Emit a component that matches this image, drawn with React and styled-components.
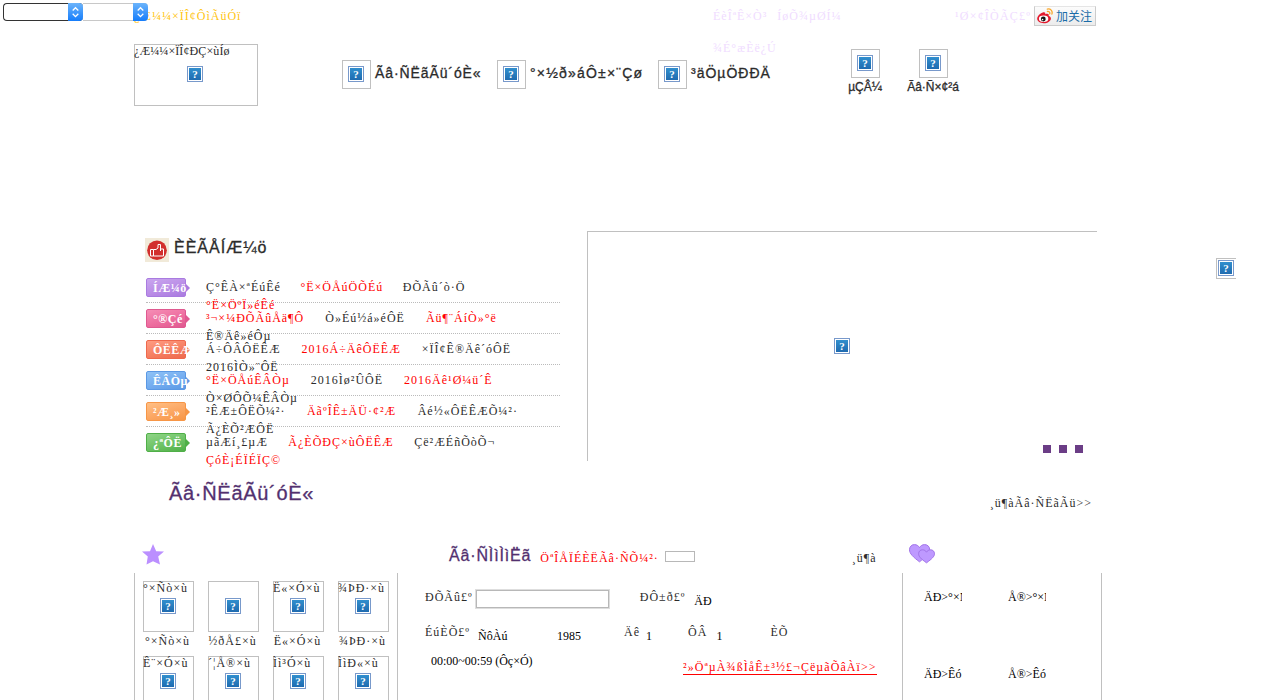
import React from "react";
import styled, { createGlobalStyle } from "styled-components";

const Global = createGlobalStyle`
  * { box-sizing: border-box; }
  body {
    margin: 0; background: #fff; color: #2b2b2b; overflow: hidden;
    font: 12px/18px "Liberation Serif", "Noto Sans CJK SC", serif;
    letter-spacing: 1px;
  }
`;
const Page = styled.div`position: relative; width: 1280px; height: 700px; overflow: hidden;`;
const Wrap = styled.div`width: 968px; margin-left: 134px;`;
const Text = styled.span`
  display: block; white-space: nowrap; flex: none;
  color: ${p => p.$color || "inherit"};
  letter-spacing: ${p => p.$track ?? 1}px;
  margin-left: ${p => p.$left || 0}px;
  margin-top: ${p => p.$top || 0}px;
`;
const Heading = styled(Text)`
  font-family: "Liberation Sans", sans-serif;
  font-size: ${p => p.$size}px;
  color: ${p => p.$color || "#2b2b2b"};
  -webkit-text-stroke: 0.3px currentColor;
`;

/* Drop-downs over the page corner */
const Selects = styled.div`position: absolute; z-index: 2; left: 3px; top: 3px; display: flex;`;
const Select = styled.div`
  width: ${p => p.$w}px; height: 18px; display: flex; justify-content: flex-end;
  border: 1px solid ${p => (p.$dark ? "#333" : "#c8c8c8")}; border-right: 0;
  border-left-width: ${p => (p.$dark ? 1 : 0)}px;
  border-radius: ${p => (p.$dark ? "4px" : "0 4px 4px 0")}; background: #fff;
`;
const Arrows = styled.svg`display: block; width: 15px; height: 18px; margin-top: -1px;`;
const Picker = ({ w, dark }) => (
  <Select $w={w} $dark={dark}>
    <Arrows viewBox="0 0 15 18">
      <defs><linearGradient id="aqua" x2="0" y2="1"><stop stopColor="#6cb4fb" /><stop offset="1" stopColor="#157dfb" /></linearGradient></defs>
      <path d="M0 0H11Q15 0 15 4V14Q15 18 11 18H0Z" fill="url(#aqua)" />
      <path d="M4.700 7.500 7.500 4.700 10.300 7.500M4.700 10.800 7.500 13.600 10.300 10.800" fill="none" stroke="#fff" strokeWidth="1.3" />
    </Arrows>
  </Select>
);

/* Missing image placeholder */
const Frame = styled.div`
  position: relative; flex: none; display: flex; align-items: center; justify-content: center;
  width: ${p => p.$w}px; height: ${p => p.$h}px; padding: 0 ${p => (p.$w % 2 ? 1 : 2)}px ${p => (p.$h % 2 ? 1 : 2)}px 0;
  border: 1px solid #c0c0c0;
`;
const Alt = styled.span`position: absolute; left: -1px; top: -3px; white-space: nowrap; letter-spacing: ${p => p.$track ?? 1}px;`;
const Mark = styled.svg`display: block; width: 16px; height: 16px; flex: none;`;
const Missing = () => (
  <Mark viewBox="0 0 16 16">
    <defs><linearGradient id="mark" x2="0" y2="1"><stop stopColor="#318fce" /><stop offset="1" stopColor="#1f6bb0" /></linearGradient></defs>
    <rect x=".5" y=".5" width="15" height="15" fill="#fff" stroke="#7899cb" />
    <rect x="2" y="2" width="12" height="12" fill="url(#mark)" />
    <text x="8" y="12" textAnchor="middle" fontFamily="Liberation Serif, serif" fontWeight="bold" fontSize="11" letterSpacing="0" fill="#fff">?</text>
  </Mark>
);
const Picture = ({ w = 29, h = w, alt, track }) => (
  <Frame $w={w} $h={h}>{alt && <Alt $track={track}>{alt}</Alt>}<Missing /></Frame>
);

const TopBar = styled(Wrap)`
  display: grid; grid-template-columns: 579px 242px 79px 1fr; height: 32px; padding-top: 6px;
`;
const TopLinks = styled.div`
  display: flex; flex-wrap: wrap; gap: 14px 10px; width: 140px; height: 50px; color: #f0dcff;
`;
const Follow = styled.div`
  width: 62px; height: 20px; display: flex; align-items: center; padding-left: 2px; gap: 3px;
  border: 1px solid #ccc; border-top-color: #e5e5e5; background: linear-gradient(#fcfcfc, #ececec);
  color: #1a6ca8; font: 12px/18px "Noto Sans CJK SC", sans-serif; letter-spacing: 0; white-space: nowrap;
`;
const Weibo = () => (
  <svg width="16" height="16" viewBox="0 0 16 16">
    <path d="M6.3 4.2C3.3 5 .2 8 .2 10.8c0 2.7 3.1 4.4 6.5 4.4 4.2 0 7.2-2.3 7.2-4.8 0-1.5-1.2-2.2-2.2-2.5.4-1.9-.6-2.6-3.5-1.6.5-1.7-.2-2.4-1.9-2.1Z" fill="#e31a2d" />
    <ellipse cx="6.6" cy="10.8" rx="4.7" ry="3.2" fill="#fff" />
    <circle cx="6.3" cy="11" r="2.4" fill="#161616" /><circle cx="5.6" cy="11.6" r=".8" fill="#fff" />
    <path d="M10.3 1.1c3.2-.7 5.6 1.8 4.6 5M10.4 3.5c1.6-.3 2.8.8 2.3 2.4" fill="none" stroke="#f9a72b" strokeWidth="1.3" strokeLinecap="round" />
  </svg>
);

const Header = styled(Wrap)`display: flex; height: 199px; padding-top: 12px;`;
const Nav = styled.nav`display: flex; width: 489px; padding-top: 16px; margin-left: 84px;`;
const NavItem = styled.div`display: flex; width: ${p => p.$w}px; gap: 4px; flex: none;`;
const Account = styled.div`
  display: flex; flex-direction: column; align-items: center; width: 68px; flex: none;
  padding-top: 5px;
`;

const Feature = styled(Wrap)`display: flex; height: 230px; padding-left: 11px;`;
const Hot = styled.section`width: 442px; padding-top: 7px;`;
const HotTitle = styled.div`display: flex; gap: 5px; height: 34px;`;
const HotRow = styled.div`
  width: 414px; height: 31px; margin-left: 1px; padding-top: 6px; display: flex;
  border-bottom: ${p => (p.$last ? "0" : "1px dotted #bbb")};
`;
const Tag = styled.div`
  position: relative; width: 40px; height: 19px; margin-right: 20px; padding-left: 6px; flex: none;
  line-height: 18px; color: #fff; white-space: nowrap; font-weight: bold; letter-spacing: 0.5px;
  border: 1px solid ${p => p.$edge}; border-radius: 2px;
  background: linear-gradient(165deg, ${p => p.$light}, ${p => p.$tone} 60%, ${p => p.$edge});
  &::after {
    content: ""; position: absolute; left: 39px; top: 5px;
    border: 4px solid transparent; border-left-color: ${p => p.$edge}; border-right: 0;
  }
`;
const TagText = styled.span`position: relative; z-index: 1;`;
const Links = styled.div`
  display: flex; flex-wrap: wrap; align-content: flex-start;
  width: 335px; height: 36px; column-gap: ${p => p.$gap}px;
`;

const Slider = styled.div`
  display: flex; flex-direction: column; align-items: flex-start; width: 510px; height: 230px; padding: 106px 0 0 246px;
  border-left: 1px solid #c0c0c0; border-top: 1px solid #c0c0c0;
`;
const Dots = styled.div`display: flex; gap: 8px; margin: 91px 0 0 209px;`;
const Dot = styled.i`width: 8px; height: 8px; background: #6b3d86;`;
const Floating = styled.div`
  position: absolute; left: 1216px; top: 258px; width: 20px; height: 21px; padding: 1px 0 0 1px;
  border: 1px solid #c0c0c0; border-right: 0;
`;

const Band = styled(Wrap)`display: flex; justify-content: space-between; height: 83px; padding: 20px 10px 0 35px;`;
const Columns = styled(Wrap)`display: grid; grid-template-columns: 264px 504px 200px;`;
const ColHead = styled.div`display: flex; height: 29px; padding-left: ${p => p.$pad}px;`;
const Signs = styled.div`
  display: grid; grid-template-columns: repeat(4, 65px); grid-auto-rows: 75px; height: 127px; padding: 8px 0 0 8px;
  border: solid #c0c0c0; border-width: 0 1px; overflow: hidden;
`;
const Sign = styled.div`display: flex; flex-direction: column; width: 51px; align-items: center;`;
const FormRow = styled.div`display: flex; height: ${p => p.$h}px; padding-left: 27px;`;
const Input = styled.div`width: ${p => p.$w}px; height: ${p => p.$h}px; margin: ${p => p.$m}; border: 1px solid #b8b8b8; flex: none; box-shadow: ${p => (p.$soft ? "0 0 0 1px #dedede" : "none")};`;
const Value = styled(Text)`color: #000; letter-spacing: 0; width: ${p => (p.$w ? p.$w + "px" : "auto")}; overflow: hidden;`;
const Underlined = styled(Text)`height: 17px; border-bottom: 1px solid #f00;`;
const Matches = styled.div`
  display: grid; grid-template-columns: 84px 84px; grid-auto-rows: 77px; height: 127px; padding: 15px 0 0 21px;
  border: solid #c0c0c0; border-width: 0 1px; overflow: hidden;
`;

const ROWS = [
  ["ÍÆ¼ö", "#c9a6ee", "#b98be6", "#a97be0", 19.5, [["Ç°ÊÀ×ªÉúÊé"], ["°Ë×ÖÅúÖÕÉú", 1], ["ÐÕÃû´ò·Ö"], ["°Ë×ÖºÏ»éÊé", 1]]],
  ["°®Çé", "#f58db5", "#ed6c9e", "#df5990", 21, [["³¬×¼ÐÕÃûÅä¶Ô", 1], ["Ò»Éú½á»éÔË"], ["Ãü¶¨ÁíÒ»°ë", 1], ["Ê®Äê»éÔµ"]]],
  ["ÔËÊÆ", "#ff9c82", "#f57e61", "#ee694d", 21, [["Á÷ÔÂÔËÊÆ"], ["2016Á÷ÄêÔËÊÆ", 1], ["×ÏÎ¢Ê®Äê´óÔË"], ["2016ÌÒ»¨ÔË"]]],
  ["ÊÂÒµ", "#8fc2f6", "#72abef", "#5b98e4", 21, [["°Ë×ÖÅúÊÂÒµ", 1], ["2016Ìø²ÛÔË"], ["2016Äê¹Ø¼ü´Ê", 1], ["Ò×ØÔÕ¼ÊÂÒµ"]]],
  ["²Æ¸»", "#ffbf85", "#fba560", "#f79646", 21.5, [["²ÊÆ±ÔËÕ¼²·"], ["ÄãºÎÊ±ÄÜ·¢²Æ", 1], ["Âé½«ÔËÊÆÕ¼²·"], ["Ã¿ÈÕ²ÆÔË"]]],
  ["¿ªÔË", "#8fd487", "#6bc162", "#50af48", 20.5, [["µãÆí¸£µÆ"], ["Ã¿ÈÕÐÇ×ùÔËÊÆ", 1], ["Çë²ÆÉñÕòÕ¬"], ["ÇóÈ¡ÉÏÉÏÇ©", 1]]],
];
const SIGNS = [
  { alt: "°×Ñò×ù", name: "°×Ñò×ù" }, { name: "½ðÅ£×ù" }, { alt: "Ë«×Ó×ù", name: "Ë«×Ó×ù" }, { alt: "¾ÞÐ·×ù", name: "¾ÞÐ·×ù" },
  { alt: "Ê¨×Ó×ù" }, { alt: "´¦Å®×ù" }, { alt: "Ìì³Ó×ù" }, { alt: "ÌìÐ«×ù" },
];

const Thumb = () => (
  <svg width="24" height="24" viewBox="0 0 24 24">
    <rect width="24" height="24" fill="#f1ead9" />
    <circle cx="12" cy="12.3" r="9.8" fill="#d22f2d" />
    <path d="M5.500 11.500h3v6.500h-3ZM8.500 11.500h2.500l2-1.500V6.500h2.500v4.500h3v7H8.500M15.500 11v2" fill="none" stroke="#fff" />
  </svg>
);
const Star = () => (
  <svg width="22" height="21" viewBox="0 0 22 21"><path d="M11 0 14.2 7.3 22 7.6 16.2 12.6 18 20.5 11 17.2 4.5 20.5 5.8 12.6 0 7.6 8 7.3Z" fill="#bb8fff" /></svg>
);
const Hearts = () => (
  <svg width="26" height="20" viewBox="0 0 26 20" fill="#be99ff" stroke="#a275e8">
    <path d="M10.5 17.8C4 13 .5 9.500.5 5.8.5 2.600 2.700.6 5.500.6c2.200 0 4 1.200 5 3C11.500 1.800 13.500.6 15.500.6c3.200 0 5.200 2.100 5.200 5.200 0 3.700-4 7.300-10.200 12Z" />
    <path d="M17.500 18.800C12 15 9.600 12.500 9.600 9.800c0-2.500 1.700-4 3.900-4 1.700 0 3.200.9 4 2.400.8-1.500 2.300-2.400 4-2.400 2.300 0 4 1.500 4 4 0 2.700-2.700 5.200-8 9Z" />
  </svg>
);

export default function App() {
  return (
    <Page>
      <Global />
      <Selects><Picker w={80} dark /><Picker w={65} /></Selects>
      <TopBar>
        <Text $color="#ffc411" $top={1}>¿Æ¼¼×ÏÎ¢ÔìÃüÓï</Text>
        <TopLinks><Text $top={1}>ÉèÎªÊ×Ò³</Text><Text $top={1}>ÍøÕ¾µØÍ¼</Text><Text>¾É°æÈë¿Ú</Text></TopLinks>
        <Text $color="#f0dcff" $top={1} $track={1.2}>¹Ø×¢ÎÒÃÇ£º</Text>
        <Follow><Weibo />加关注</Follow>
      </TopBar>
      <Header>
        <Picture w={124} h={62} alt="¿Æ¼¼×ÏÎ¢ÐÇ×ùÍø" track={0.1} />
        <Nav>
          <NavItem $w={155}><Picture /><Heading $size={14} $top={4} $track={0.9}>Ãâ·ÑËãÃü´óÈ«</Heading></NavItem>
          <NavItem $w={161}><Picture /><Heading $size={14} $top={4} $track={1.2}>°×½ð»áÔ±×¨Çø</Heading></NavItem>
          <NavItem $w={120}><Picture /><Heading $size={14} $top={4}>³äÖµÖÐÐÄ</Heading></NavItem>
        </Nav>
        <Account><Picture /><Heading $size={12} $track={0}>µÇÂ¼</Heading></Account>
        <Account><Picture /><Heading $size={12} $track={0}>Ãâ·Ñ×¢²á</Heading></Account>
      </Header>
      <Feature>
        <Hot>
          <HotTitle><Thumb /><Heading $size={16} $top={1}>ÈÈÃÅÍÆ¼ö</Heading></HotTitle>
          {ROWS.map(([tag, light, tone, edge, gap, links], i) => (
            <HotRow key={tag} $last={i === 5}>
              <Tag $light={light} $tone={tone} $edge={edge}><TagText>{tag}</TagText></Tag>
              <Links $gap={gap}>{links.map(([t, red]) => <Text key={t} $color={red && "#f00"}>{t}</Text>)}</Links>
            </HotRow>
          ))}
        </Hot>
        <Slider><Missing /><Dots><Dot /><Dot /><Dot /></Dots></Slider>
      </Feature>
      <Floating><Missing /></Floating>
      <Band>
        <Heading $size={20} $color="#52306f" $top={3} $track={0.7}>Ãâ·ÑËãÃü´óÈ«</Heading>
        <Text $top={13}>¸ü¶àÃâ·ÑËãÃü&gt;&gt;</Text>
      </Band>
      <Columns>
        <section>
          <ColHead $pad={8}><Star /></ColHead>
          <Signs>
            {SIGNS.map(({ alt, name }, i) => (
              <Sign key={i}><Picture w={51} alt={alt} />{name && <Text $left={-2}>{name}</Text>}</Sign>
            ))}
          </Signs>
        </section>
        <section>
          <ColHead $pad={51}>
            <Heading $size={16} $color="#52306f" $top={3} $track={0.85}>Ãâ·ÑÌìÌìËã</Heading>
            <Text $color="#f00" $left={9} $top={5}>ÖªÎÅÏÉÈËÃâ·ÑÕ¼²·</Text>
            <Input $w={30} $h={11} $m="7px 0 0 6px" />
            <Text $left={157} $top={5}>¸ü¶à</Text>
          </ColHead>
          <FormRow $h={43}>
            <Text $top={15}>ÐÕÃû£º</Text><Input $w={133} $h={18} $m="17px 31px 0 3px" $soft />
            <Text $top={15}>ÐÔ±ð£º</Text><Value $left={9} $top={19}>ÄÐ</Value>
          </FormRow>
          <FormRow $h={36}>
            <Text $top={7}>ÉúÈÕ£º</Text><Value $left={8} $top={11} $w={79}>ÑôÀú</Value><Value $top={11} $w={67}>1985</Value>
            <Text $top={7}>Äê</Text><Value $left={6} $top={11} $w={42}>1</Value>
            <Text $top={7}>ÔÂ</Text><Value $left={9} $top={11} $w={54}>1</Value><Text $top={7}>ÈÕ</Text>
          </FormRow>
          <FormRow $h={48}>
            <Value $left={6} $w={252}>00:00~00:59 (Ôç×Ó)</Value>
            <Underlined $color="#f00" $top={6} $track={1.07}>²»ÖªµÀ¾ßÌåÊ±³½£¬ÇëµãÕâÀï&gt;&gt;</Underlined>
          </FormRow>
        </section>
        <section>
          <ColHead $pad={6.500}><Hearts /></ColHead>
          <Matches>
            {["ÄÐ>°×Ñò", "Å®>°×Ñò", "ÄÐ>Êó", "Å®>Êó"].map(t => <Value key={t} $w={38}>{t}</Value>)}
          </Matches>
        </section>
      </Columns>
    </Page>
  );
}
